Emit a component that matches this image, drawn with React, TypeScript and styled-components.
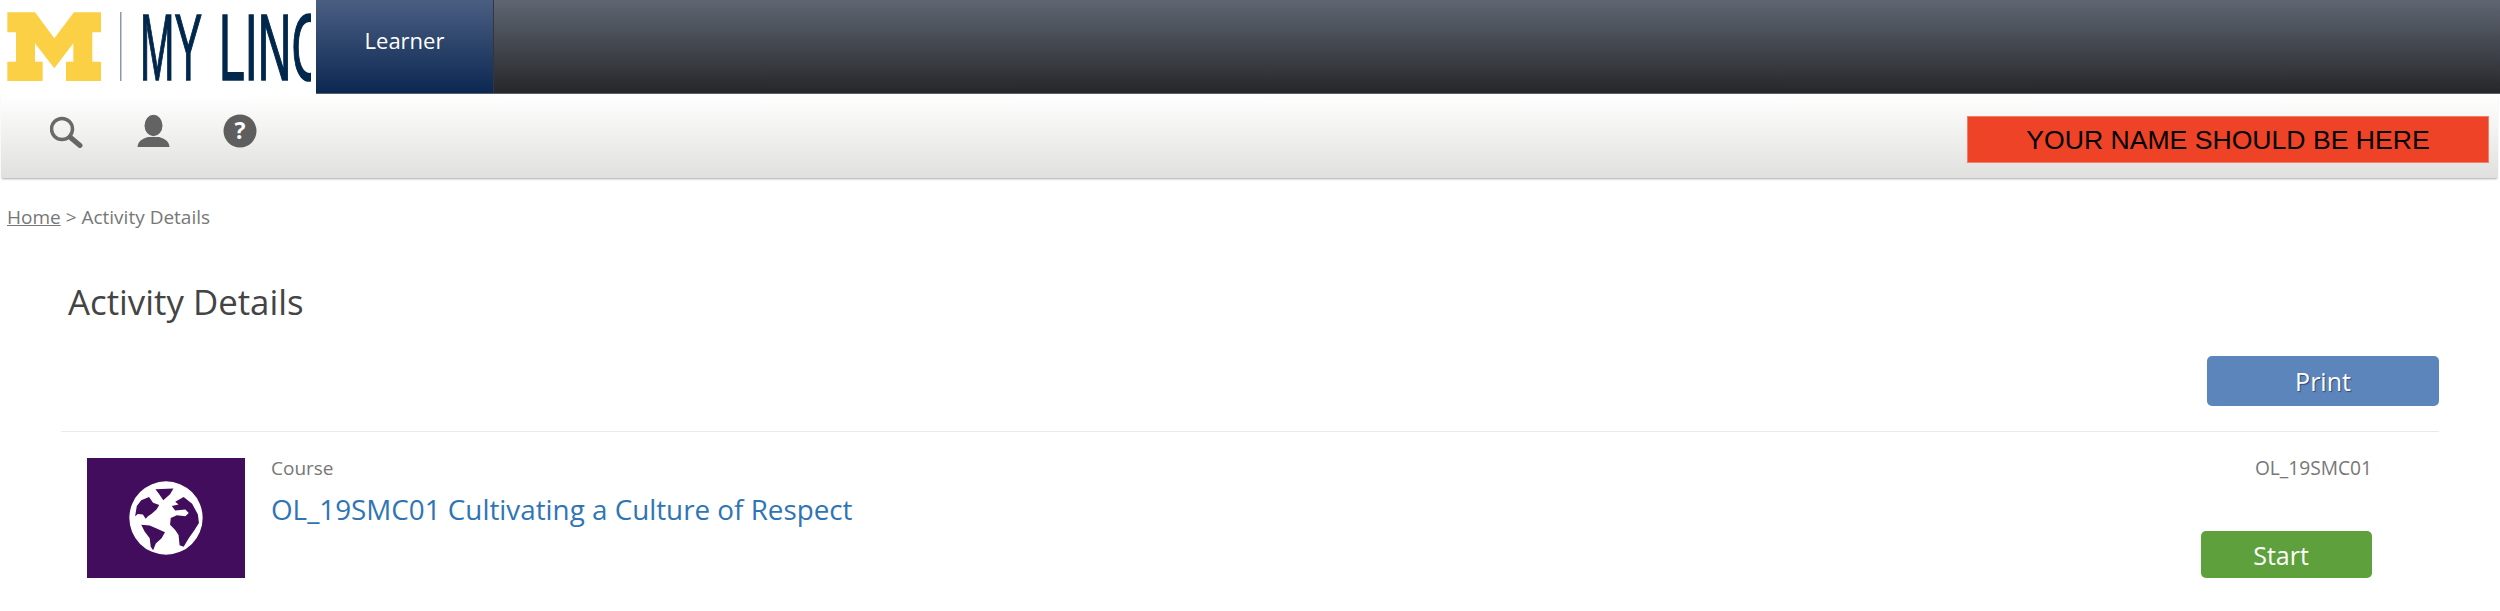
import React from 'react';
import styled, { createGlobalStyle } from 'styled-components';

const GlobalStyle = createGlobalStyle`
  html, body {
    margin: 0;
    padding: 0;
    background: #fff;
    font-family: 'Open Sans', 'Liberation Sans', sans-serif;
    overflow: hidden;
  }
`;

const Page = styled.div`
  width: 2500px;
  height: 611px;
  overflow: hidden;
`;

const TopBar = styled.header`
  display: flex;
  height: 94px;
  box-sizing: border-box;
  border-bottom: 1px solid #5c6068;
  background: linear-gradient(#5f6672, #26272a);
`;

const LogoBox = styled.div`
  width: 316px;
  height: 94px;
  background: #fff;
  flex: none;
`;

const LearnerTab = styled.div`
  width: 177px;
  height: 93px;
  padding-bottom: 14px;
  box-sizing: border-box;
  display: flex;
  align-items: center;
  justify-content: center;
  color: #fff;
  font-size: 22px;
  background: linear-gradient(#4b5e82, #0b2852);
  box-shadow: 1px 0 0 #33363b;
`;

const Toolbar = styled.div`
  display: flex;
  justify-content: space-between;
  height: 84px;
  margin: 0 2px 0 1px;
  padding: 20px 9px 0 49px;
  box-sizing: border-box;
  background: linear-gradient(#ffffff, #f3f3f2 40%, #e0e0de);
  box-shadow: 0 2px 2px -1px #aaa;
`;

const ToolIcons = styled.div`
  display: flex;
  align-items: flex-start;
  gap: 53px;
`;

const NameBanner = styled.div`
  width: 522px;
  height: 47px;
  margin-top: 2px;
  padding-top: 2px;
  box-sizing: border-box;
  display: flex;
  align-items: center;
  justify-content: center;
  background: #ee4326;
  border: 1px solid #f37d68;
  color: #000;
  font-family: 'Liberation Sans', Arial, sans-serif;
  font-size: 26.6px;
`;

const Crumbs = styled.div`
  padding: 27px 0 0 7px;
  color: #777;
  font-size: 19px;
  line-height: 24px;
`;

const HomeLink = styled.a`
  color: #777;
  text-decoration: underline;
`;

const Title = styled.h1`
  margin: 51px 0 0 68px;
  font-size: 34.8px;
  line-height: 44px;
  font-weight: 400;
  color: #444;
`;

const Main = styled.main`
  margin: 0 61px;
`;

const PrintRow = styled.div`
  display: flex;
  justify-content: flex-end;
  padding-bottom: 25px;
  margin-top: 32px;
  border-bottom: 1px solid #ebebeb;
`;

const Button = styled.button<{ $color: string; $width: number; $height: number }>`
  width: ${p => p.$width}px;
  height: ${p => p.$height}px;
  padding: 0;
  border: 0;
  border-radius: 5px;
  background: ${p => p.$color};
  color: #fff;
  font-family: inherit;
  font-size: 25px;
`;

const PrintButton = styled(Button)`
  text-shadow: 1px 1px 1px #2d4a75;
`;

const StartButton = styled(Button)`
  padding-right: 11px;
`;

const CourseRow = styled.section`
  display: flex;
  padding: 26px 67px 0 26px;
`;

const Thumb = styled.div`
  width: 158px;
  height: 120px;
  flex: none;
  display: flex;
  align-items: center;
  justify-content: center;
  background: #410d5c;
`;

const CourseText = styled.div`
  flex: 1;
  padding-left: 26px;
`;

const CourseType = styled.div`
  font-size: 19px;
  line-height: 20px;
  color: #777;
`;

const CourseTitle = styled.a`
  display: block;
  margin-top: 13px;
  font-size: 27.8px;
  line-height: 36px;
  color: #2f75b5;
`;

const CourseSide = styled.div`
  display: flex;
  flex-direction: column;
  align-items: flex-end;
`;

const CourseCode = styled.div`
  font-size: 19.2px;
  line-height: 20px;
  color: #777;
  margin-bottom: 53px;
`;

const Logo = () => (
  <svg width="316" height="94" viewBox="0 0 316 94">
    <defs>
      <clipPath id="logo-word">
        <rect x="130" y="0" width="181" height="94" />
      </clipPath>
    </defs>
    <path
      fill="#fbd045"
      transform="scale(0.3333)"
      d="M22 37H105L163 115L222 37H303V97H277V185H303V243H198V185H220V130L163 205L105 130V185H128V243H22V185H48V97H22Z"
    />
    <rect x="120" y="12" width="1.5" height="69" fill="#8a9bb0" />
    <g
      clipPath="url(#logo-word)"
      fill="#00274c"
      stroke="#00274c"
      strokeWidth="1.7"
      fontFamily="'Liberation Sans', Arial, sans-serif"
      fontSize="94"
    >
      <text x="140" y="80" textLength="62" lengthAdjust="spacingAndGlyphs">MY</text>
      <text x="219" y="80" textLength="106" lengthAdjust="spacingAndGlyphs">LINC</text>
    </g>
  </svg>
);

const SearchIcon = () => (
  <svg width="34" height="34" viewBox="0 0 34 34">
    <circle cx="12" cy="15" r="10.5" fill="none" stroke="#6a6a6a" strokeWidth="3.5" />
    <path d="M20.5 23.5L30 31.5" stroke="#666" strokeWidth="5" strokeLinecap="round" />
  </svg>
);

const UserIcon = () => (
  <svg width="33" height="34" viewBox="0 0 33 34">
    <ellipse cx="16.5" cy="11.5" rx="9" ry="10.7" fill="#636363" />
    <path d="M0.5 33C1 27 5 25 11 23H22C28 25 32 27 32.5 33Z" fill="#636363" />
  </svg>
);

const HelpIcon = () => (
  <svg width="34" height="34" viewBox="0 0 34 34">
    <circle cx="17" cy="17" r="16.5" fill="#5e5e5e" />
    <text x="17" y="25" textAnchor="middle" fill="#fff" fontSize="23" fontWeight="700" fontFamily="'Open Sans', sans-serif">?</text>
  </svg>
);

// continents are knocked out of the white disc in the thumbnail's purple
const GlobeIcon = () => (
  <svg width="74" height="74" viewBox="29 21 218 218">
    <circle cx="138" cy="130" r="108" fill="#fff" />
    <g fill="#410d5c">
      <path d="M107 45L160 43L150 60L130 78L118 60Z" />
      <path d="M88 68L100 85L118 92L110 105L95 118L85 125L78 132L70 120L55 118L47 125L52 95L65 78Z" />
      <path d="M65 150L90 152L112 162L135 172L125 190L108 205L100 225L93 215L90 190L75 170Z" />
      <path d="M190 68L215 88L232 120L235 145L222 165L205 190L190 215L178 210L175 180L165 165L150 150L152 130L170 122L195 125L205 115L195 105L165 108L155 95L175 90L165 82Z" />
    </g>
  </svg>
);

export default function App() {
  return (
    <Page>
      <GlobalStyle />
      <TopBar>
        <LogoBox>
          <Logo />
        </LogoBox>
        <LearnerTab>Learner</LearnerTab>
      </TopBar>
      <Toolbar>
        <ToolIcons>
          <SearchIcon />
          <UserIcon />
          <HelpIcon />
        </ToolIcons>
        <NameBanner>YOUR NAME SHOULD BE HERE</NameBanner>
      </Toolbar>
      <Crumbs>
        <HomeLink>Home</HomeLink> &gt; Activity Details
      </Crumbs>
      <Title>Activity Details</Title>
      <Main>
        <PrintRow>
          <PrintButton $color="#5c85bb" $width={232} $height={50}>Print</PrintButton>
        </PrintRow>
        <CourseRow>
          <Thumb>
            <GlobeIcon />
          </Thumb>
          <CourseText>
            <CourseType>Course</CourseType>
            <CourseTitle>OL_19SMC01 Cultivating a Culture of Respect</CourseTitle>
          </CourseText>
          <CourseSide>
            <CourseCode>OL_19SMC01</CourseCode>
            <StartButton $color="#5ea03c" $width={171} $height={47}>Start</StartButton>
          </CourseSide>
        </CourseRow>
      </Main>
    </Page>
  );
}
